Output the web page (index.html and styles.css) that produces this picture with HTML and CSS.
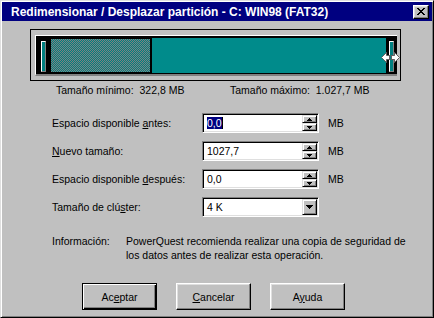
FILE: index.html
```html
<!DOCTYPE html>
<html lang="es">

<head>
    <meta charset="UTF-8">
    <meta name="viewport" content="width=device-width, initial-scale=1.0">
    <title>Redimensionar / Desplazar partición</title>
    <link rel="stylesheet" href="styles.css">
</head>

<body>
    <div class="window">
        <div class="titlebar">
            <span class="title">Redimensionar / Desplazar partición - C: WIN98 (FAT32)</span>
            <span class="close">
                <svg width="8" height="7" viewBox="0 0 8 7">
                    <path d="M0 0h2v1h-2z M6 0h2v1h-2z M1 1h2v1h-2z M5 1h2v1h-2z M2 2h4v1h-4z M3 3h2v1h-2z M2 4h4v1h-4z M1 5h2v1h-2z M5 5h2v1h-2z M0 6h2v1h-2z M6 6h2v1h-2z" fill="#000"/>
                </svg>
            </span>
        </div>

        <div class="content">
            <div class="bar-box">
                <div class="well">
                    <div class="handle handle-left"><span class="grip"></span></div>
                    <div class="used">
                        <svg width="99" height="33" viewBox="0 0 99 33">
                            <path d="M0 .5h99M1 1.5h98M0 2.5h99M1 3.5h98M0 4.5h99M1 5.5h98M0 6.5h99M1 7.5h98M0 8.5h99M1 9.5h98M0 10.5h99M1 11.5h98M0 12.5h99M1 13.5h98M0 14.5h99M1 15.5h98M0 16.5h99M1 17.5h98M0 18.5h99M1 19.5h98M0 20.5h99M1 21.5h98M0 22.5h99M1 23.5h98M0 24.5h99M1 25.5h98M0 26.5h99M1 27.5h98M0 28.5h99M1 29.5h98M0 30.5h99M1 31.5h98M0 32.5h99" stroke="#808080" stroke-width="1" stroke-dasharray="1 1" fill="none"/>
                        </svg>
                    </div>
                    <div class="free"></div>
                    <div class="handle handle-right">
                        <span class="grip"></span>
                        <svg class="cursor" width="19" height="11" viewBox="0 0 19 11">
                            <path d="M0.5 5.5 L5.5 0.5 V3.5 H13.5 V0.5 L18.5 5.5 L13.5 10.5 V7.5 H5.5 V10.5 Z" fill="#fff" stroke="#606060" stroke-width="1"/>
                            <path d="M8 3.5h3v4h-3z" fill="#008080"/>
                            <path d="M8.5 3v5 M10.5 3v5" stroke="#606060" stroke-width="1"/>
                        </svg>
                    </div>
                </div>
            </div>

            <div class="limits">
                <span class="limit-min">Tamaño mínimo:&nbsp; 322,8 MB</span>
                <span class="limit-max">Tamaño máximo:&nbsp; 1.027,7 MB</span>
            </div>

            <div class="fields">
                <label>Espacio disponible <u>a</u>ntes:</label>
                <div class="field spin">
                    <span class="value"><span class="selected">0,0</span></span>
                    <span class="arrows">
                        <span class="arrow-btn"><svg width="5" height="3" viewBox="0 0 5 3"><path d="M2 0h1v1h-1z M1 1h3v1h-3z M0 2h5v1h-5z" fill="#000"/></svg></span>
                        <span class="arrow-btn"><svg width="5" height="3" viewBox="0 0 5 3"><path d="M0 0h5v1h-5z M1 1h3v1h-3z M2 2h1v1h-1z" fill="#000"/></svg></span>
                    </span>
                </div>
                <span class="unit">MB</span>

                <label><u>N</u>uevo tamaño:</label>
                <div class="field spin">
                    <span class="value">1027,7</span>
                    <span class="arrows">
                        <span class="arrow-btn"><svg width="5" height="3" viewBox="0 0 5 3"><path d="M2 0h1v1h-1z M1 1h3v1h-3z M0 2h5v1h-5z" fill="#000"/></svg></span>
                        <span class="arrow-btn"><svg width="5" height="3" viewBox="0 0 5 3"><path d="M0 0h5v1h-5z M1 1h3v1h-3z M2 2h1v1h-1z" fill="#000"/></svg></span>
                    </span>
                </div>
                <span class="unit">MB</span>

                <label>Espacio disponible <u>d</u>espués:</label>
                <div class="field spin">
                    <span class="value">0,0</span>
                    <span class="arrows">
                        <span class="arrow-btn"><svg width="5" height="3" viewBox="0 0 5 3"><path d="M2 0h1v1h-1z M1 1h3v1h-3z M0 2h5v1h-5z" fill="#000"/></svg></span>
                        <span class="arrow-btn"><svg width="5" height="3" viewBox="0 0 5 3"><path d="M0 0h5v1h-5z M1 1h3v1h-3z M2 2h1v1h-1z" fill="#000"/></svg></span>
                    </span>
                </div>
                <span class="unit">MB</span>

                <label>Tamaño de clú<u>s</u>ter:</label>
                <div class="field combo">
                    <span class="value">4 K</span>
                    <span class="drop-btn"><svg width="7" height="4" viewBox="0 0 7 4"><path d="M0 0h7v1h-7z M1 1h5v1h-5z M2 2h3v1h-3z M3 3h1v1h-1z" fill="#000"/></svg></span>
                </div>
                <span></span>
            </div>

            <div class="info">
                <span class="info-label">Información:</span>
                <p class="info-text">PowerQuest recomienda realizar una copia de seguridad de los datos antes de realizar esta operación.</p>
            </div>

            <div class="buttons">
                <button class="default">Ac<u>e</u>ptar</button>
                <button><u>C</u>ancelar</button>
                <button>A<u>y</u>uda</button>
            </div>
        </div>
    </div>
</body>

</html>
```

FILE: styles.css
```css
body {
    margin: 0;
    padding: 0;
    background-color: #c0c0c0;
    font-family: "Liberation Sans", Arial, sans-serif;
    font-size: 10.5px;
    color: #000;
}

.window {
    width: 434px;
    height: 318px;
    box-sizing: border-box;
    border: 1px solid;
    border-color: #dfdfdf #000 #000 #dfdfdf;
    box-shadow: inset 1px 1px #fff, inset -1px -1px #808080;
    padding: 1px;
    background-color: #c0c0c0;
}

.titlebar {
    height: 19px;
    background-color: #000080;
    color: #fff;
    display: flex;
    align-items: center;
    justify-content: space-between;
    padding: 0 3px 0 9px;
}

.title {
    font-weight: bold;
    font-size: 12px;
}

.close {
    width: 16px;
    height: 14px;
    box-sizing: border-box;
    background-color: #c0c0c0;
    border: 1px solid;
    border-color: #fff #000 #000 #fff;
    box-shadow: inset -1px -1px #808080, inset 1px 1px #dfdfdf;
    display: flex;
    align-items: center;
    justify-content: center;
}

.content {
    padding: 8px 0 0 0;
}

/* barra de particion */
.bar-box {
    margin-left: 28px;
    width: 371px;
    height: 52px;
    box-sizing: border-box;
    border: 1px solid #000;
    padding: 5px 0 0 4px;
}

.well {
    width: 362px;
    height: 41px;
    box-sizing: border-box;
    background-color: #000;
    border-top: 1px solid #fff;
    border-left: 1px solid #fff;
    border-bottom: 2px solid #808080;
    padding-top: 2px;
    display: flex;
}

.handle {
    position: relative;
    display: flex;
    align-items: center;
    justify-content: center;
    background-color: #000;
}

.handle-left {
    width: 14px;
}

.handle-right {
    width: 11px;
}

.grip {
    width: 3px;
    height: 29px;
    background-color: #008080;
    border-top: 1px solid #fff;
    border-left: 1px solid #fff;
    border-right: 1px solid #808080;
    border-bottom: 1px solid #808080;
}

.used {
    width: 102px;
    height: 35px;
    box-sizing: border-box;
    border: 1px solid #000;
    border-right-width: 2px;
    background-color: #008080;
}

.used svg {
    display: block;
}

.free {
    flex: 1;
    height: 35px;
    background-color: #008b8b;
}

.cursor {
    position: absolute;
    left: -5px;
    top: 14px;
}

.limits {
    display: flex;
    height: 14px;
    line-height: 14px;
    margin-top: 2px;
}

.limit-min {
    margin-left: 54px;
    width: 174px;
}

/* formulario */
.fields {
    display: grid;
    grid-template-columns: 141px 117px auto;
    grid-auto-rows: 20px;
    row-gap: 8px;
    column-gap: 9px;
    align-items: center;
    margin: 16px 0 0 50px;
}

.fields label {
    line-height: 14px;
}

.field {
    height: 20px;
    box-sizing: border-box;
    border: 1px solid;
    border-color: #808080 #fff #fff #808080;
    box-shadow: inset 1px 1px #000, inset -1px -1px #dfdfdf;
    background-color: #fff;
    padding: 2px 1px 2px 2px;
    display: flex;
    align-items: center;
    justify-content: space-between;
}

.value {
    padding-left: 2px;
    line-height: 13px;
}

.selected {
    background-color: #000080;
    color: #fff;
    border-right: 1px solid #000;
}

.arrows {
    display: flex;
    flex-direction: column;
    width: 15px;
    height: 16px;
}

.arrow-btn,
.drop-btn {
    box-sizing: border-box;
    background-color: #c0c0c0;
    border: 1px solid;
    border-color: #dfdfdf #000 #000 #dfdfdf;
    box-shadow: inset 1px 1px #fff, inset -1px -1px #808080;
    display: flex;
    align-items: center;
    justify-content: center;
}

.arrow-btn {
    height: 8px;
}

.arrow-btn svg {
    display: block;
}

.drop-btn {
    width: 15px;
    height: 16px;
}

.unit {
    line-height: 14px;
}

.info {
    display: flex;
    margin: 17px 0 0 50px;
    line-height: 14px;
}

.info-label {
    width: 74px;
    flex-shrink: 0;
}

.info-text {
    margin: 0;
    width: 285px;
}

/* botones */
.buttons {
    display: flex;
    gap: 19px;
    margin: 21px 0 0 80px;
}

button {
    width: 75px;
    height: 27px;
    box-sizing: border-box;
    font-family: "Liberation Sans", Arial, sans-serif;
    font-size: 10.5px;
    color: #000;
    background-color: #c0c0c0;
    border: 1px solid;
    border-color: #fff #000 #000 #fff;
    box-shadow: inset -1px -1px #808080, inset 1px 1px #dfdfdf;
    padding: 0;
}

button.default {
    border-color: #000;
    box-shadow: inset 1px 1px #fff, inset -1px -1px #000, inset -2px -2px #808080;
}
```
